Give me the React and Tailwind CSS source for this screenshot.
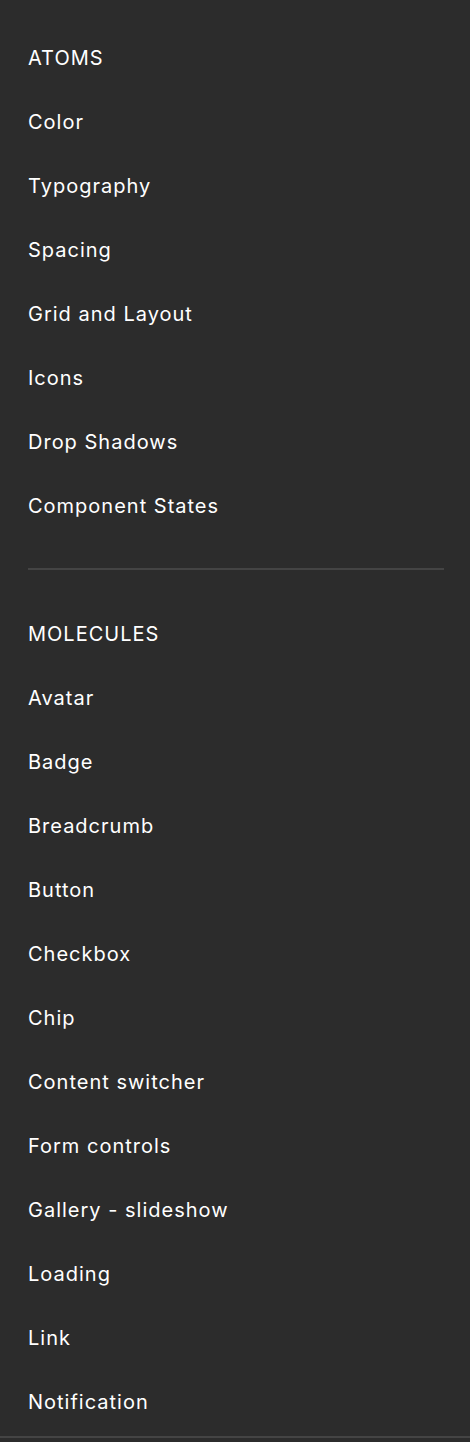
import React from 'react'

const atoms = ['Color', 'Typography', 'Spacing', 'Grid and Layout', 'Icons', 'Drop Shadows', 'Component States']
const molecules = ['Avatar', 'Badge', 'Breadcrumb', 'Button', 'Checkbox', 'Chip', 'Content switcher', 'Form controls', 'Gallery - slideshow', 'Loading', 'Link', 'Notification']

function Row({ label }) {
    return (
        <div className='h-16 flex items-center px-7 pt-[2px] text-[20px] tracking-[1px] text-white'>
            {label}
        </div>
    )
}

export default function App() {
    return (
        <div className='min-h-[1442px] bg-[#2c2c2c] pt-[25px]' style={{ fontFamily: 'Inter, "Noto Sans", sans-serif' }}>
            <Row label='ATOMS' />
            {atoms.map(a => <Row key={a} label={a} />)}
            <div className='ml-7 mr-[26px] my-[31px] h-[2px] bg-[#444444]' />
            <Row label='MOLECULES' />
            {molecules.map(m => <Row key={m} label={m} />)}
            <div className='mt-[3px] h-[2px] bg-[#444444]' />
        </div>
    )
}
